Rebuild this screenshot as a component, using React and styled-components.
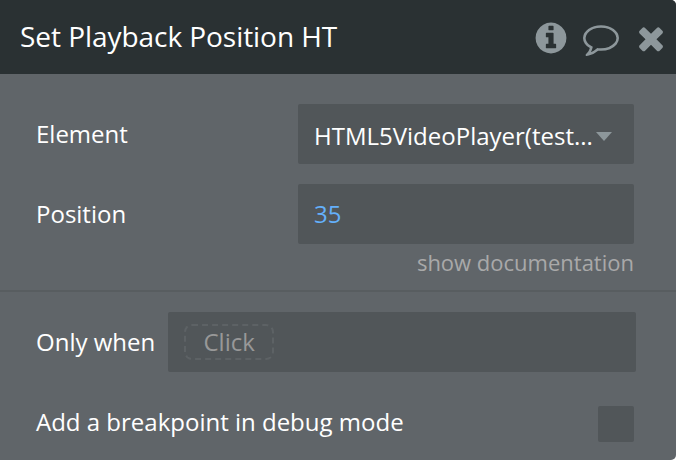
import { createGlobalStyle, styled } from "styled-components";

const GlobalStyle = createGlobalStyle`
  * {
    box-sizing: border-box;
  }

  body {
    margin: 0;
    background: #ffffff;
    font-family: "Open Sans", sans-serif;
  }
`

const Panel = styled.div`
  display: flex;
  flex-direction: column;
  width: 676px;
  height: 460px;
  background: #606569;
  border-radius: 0 5px 5px 0;
  overflow: hidden;
  color: #ffffff;
  font-size: 24px;
  line-height: 32px;
`

const Header = styled.header`
  display: flex;
  align-items: center;
  height: 74px;
  padding: 0 7px 2px 20px;
  background: #2a3133;
`

const Title = styled.h1`
  margin: 0;
  white-space: nowrap;
  font-size: 28px;
  font-weight: 400;
  letter-spacing: -0.05px;
`

const Actions = styled.div`
  display: flex;
  align-items: center;
  gap: 14px;
  margin-left: auto;
  padding-top: 4px;
`

const Icon = styled.svg`
  display: block;
  width: 36px;
  height: 36px;
  fill: #8d979b;
`

const Fields = styled.div`
  display: flex;
  flex-direction: column;
  height: 216px;
  padding: 30px 42px 0 36px;
`

const Row = styled.div`
  display: flex;
  align-items: center;
  justify-content: space-between;
  margin-bottom: ${props => props.$gap || 0}px;
`

const Label = styled.span`
  white-space: nowrap;
`

const Input = styled.div`
  display: flex;
  align-items: center;
  width: ${props => props.$width}px;
  height: 60px;
  padding: 0 16px;
  border-radius: 2px;
  background: #515659;
  color: ${props => props.$color || "#ffffff"};
`

const Select = styled(Input)`
  gap: 3px;
  padding-top: 4px;
`

const Arrow = styled.span`
  border: 8px solid transparent;
  border-top: 9px solid #8d979b;
  border-bottom: 0;
`

const DocLink = styled.a`
  align-self: flex-end;
  margin-top: 2px;
  color: #a9a9a9;
  font-size: 22px;
`

const Conditions = styled.div`
  flex: 1;
  padding: 20px 40px 0 36px;
  border-top: 2px solid #585d60;
`

const Placeholder = styled.span`
  padding: 1px 17.5px;
  border: 2px dashed #5d6265;
  border-radius: 8px;
  color: #989898;
  line-height: 30px;
`

const Checkbox = styled.div`
  width: 36px;
  height: 36px;
  margin: 2px 2px 0 0;
  border-radius: 2px;
  background: #515659;
`

const BreakpointRow = styled(Row)`
  align-items: flex-start;
`

const BreakpointLabel = styled(Label)`
  padding-top: 2px;
`

const InfoIcon = () => (
  <Icon viewBox="0 0 1792 1792">
    <path d="M1152 1376v-160q0-14-9-23t-23-9h-96v-512q0-14-9-23t-23-9h-320q-14 0-23 9t-9 23v160q0 14 9 23t23 9h96v320h-96q-14 0-23 9t-9 23v160q0 14 9 23t23 9h448q14 0 23-9t9-23zm-128-896v-160q0-14-9-23t-23-9h-192q-14 0-23 9t-9 23v160q0 14 9 23t23 9h192q14 0 23-9t9-23zm640 416q0 209-103 385.5t-279.5 279.5-385.5 103-385.5-103-279.5-279.5-103-385.5 103-385.5 279.5-279.5 385.5-103 385.5 103 279.5 279.5 103 385.5z" />
  </Icon>
)

const CommentIcon = () => (
  <Icon viewBox="0 0 1792 1792">
    <path d="M896 384q-204 0-381.5 69.5t-282 187.5-104.5 255q0 112 71.5 213.5t201.5 175.5l87 50-27 96q-24 91-70 172 152-63 275-171l43-38 57 6q69 8 130 8 204 0 381.5-69.5t282-187.5 104.5-255-104.5-255-282-187.5-381.5-69.5zm896 512q0 174-120 321.5t-326 233-450 85.5q-70 0-145-8-198 175-460 242-49 14-114 22h-5q-15 0-27-10.5t-16-27.5v-1q-3-4-.5-12t2-10 4.5-9.5l6-9 7-8.5 8-9q7-8 31-34.5t34.5-38 31-39.5 32.5-51 27-59 26-76q-157-89-247.5-220t-90.5-281q0-130 71-248.5t191-204.5 286-136.5 348-50.5 348 50.5 286 136.5 191 204.5 71 248.5z" />
  </Icon>
)

const CloseIcon = () => (
  <Icon viewBox="0 0 1792 1792">
    <path d="M1490 1322q0 40-28 68l-136 136q-28 28-68 28t-68-28l-294-294-294 294q-28 28-68 28t-68-28l-136-136q-28-28-28-68t28-68l294-294-294-294q-28-28-28-68t28-68l136-136q28-28 68-28t68 28l294 294 294-294q28-28 68-28t68 28l136 136q28 28 28 68t-28 68l-294 294 294 294q28 28 28 68z" />
  </Icon>
)

export default function App() {
  return (
    <>
      <GlobalStyle />
      <Panel>
        <Header>
          <Title>Set Playback Position HT</Title>
          <Actions>
            <InfoIcon />
            <CommentIcon />
            <CloseIcon />
          </Actions>
        </Header>
        <Fields>
          <Row $gap={20}>
            <Label>Element</Label>
            <Select $width={336}>
              HTML5VideoPlayer(test...
              <Arrow />
            </Select>
          </Row>
          <Row>
            <Label>Position</Label>
            <Input $width={336} $color="#64b0fb">35</Input>
          </Row>
          <DocLink>show documentation</DocLink>
        </Fields>
        <Conditions>
          <Row $gap={32}>
            <Label>Only when</Label>
            <Input $width={468}>
              <Placeholder>Click</Placeholder>
            </Input>
          </Row>
          <BreakpointRow>
            <BreakpointLabel>Add a breakpoint in debug mode</BreakpointLabel>
            <Checkbox />
          </BreakpointRow>
        </Conditions>
      </Panel>
    </>
  );
}
